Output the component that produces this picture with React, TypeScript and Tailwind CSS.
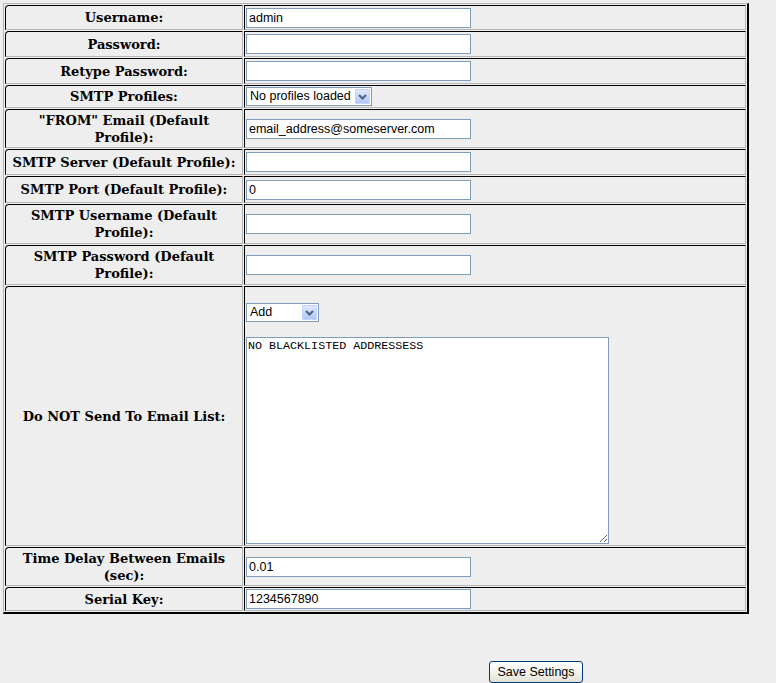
import React from 'react';

type Row = {
  label: string[];
  h: string;
  kind: 'text' | 'profiles' | 'blacklist';
  value?: string;
};

const rows: Row[] = [
  { label: ['Username:'], h: 'h-[25px]', kind: 'text', value: 'admin' },
  { label: ['Password:'], h: 'h-[26px]', kind: 'text', value: '' },
  { label: ['Retype Password:'], h: 'h-[26px]', kind: 'text', value: '' },
  { label: ['SMTP Profiles:'], h: 'h-[23px]', kind: 'profiles' },
  { label: ['"FROM" Email (Default', 'Profile):'], h: 'h-[39px]', kind: 'text', value: 'email_address@someserver.com' },
  { label: ['SMTP Server (Default Profile):'], h: 'h-[26px]', kind: 'text', value: '' },
  { label: ['SMTP Port (Default Profile):'], h: 'h-[27px]', kind: 'text', value: '0' },
  { label: ['SMTP Username (Default', 'Profile):'], h: 'h-[40px]', kind: 'text', value: '' },
  { label: ['SMTP Password (Default', 'Profile):'], h: 'h-[40px]', kind: 'text', value: '' },
  { label: ['Do NOT Send To Email List:'], h: 'h-[260px]', kind: 'blacklist' },
  { label: ['Time Delay Between Emails', '(sec):'], h: 'h-[39px]', kind: 'text', value: '0.01' },
  { label: ['Serial Key:'], h: 'h-[24px]', kind: 'text', value: '1234567890' },
];

const sans = { fontFamily: '"Liberation Sans", Arial, sans-serif' };

// XP style drop-down arrow box
const Arrow = () => (
  <span className="pointer-events-none absolute right-[2px] top-[2px] bottom-[2px] w-[15px] rounded-[1px] border border-[#c3d3fd] bg-gradient-to-b from-[#dfe8fd] to-[#b2c6f6] flex items-center justify-center">
    <svg width="9" height="6" viewBox="0 0 9 6">
      <path d="M1 1 L4.5 4.5 L8 1" fill="none" stroke="#4d6185" strokeWidth="2" />
    </svg>
  </span>
);

const XpSelect = ({ w, text }: { w: string; text: string }) => (
  <span className={`relative block ${w} h-[19px]`}>
    <select
      defaultValue={text}
      className="block appearance-none w-full h-full border border-[#7f9db9] bg-white pl-[3px] text-[12.5px] leading-[17px] text-black outline-none"
      style={sans}
    >
      <option>{text}</option>
    </select>
    <Arrow />
  </span>
);

function Field({ row }: { row: Row }) {
  if (row.kind === 'profiles') {
    return <XpSelect w="w-[126px]" text="No profiles loaded" />;
  }
  if (row.kind === 'blacklist') {
    return (
      <div className="flex flex-col pt-[15px]">
        <XpSelect w="w-[73px]" text="Add" />
        <textarea
          defaultValue="NO BLACKLISTED ADDRESSESS"
          className="block mt-[15px] w-[363px] h-[207px] border border-[#7f9db9] bg-white px-[1px] py-[1px] text-[11.7px] leading-[14px] text-black outline-none resize"
          style={{ fontFamily: '"Liberation Mono", "Courier New", monospace' }}
        />
      </div>
    );
  }
  return (
    <input
      type="text"
      defaultValue={row.value}
      className="block w-[225px] h-[20px] border border-[#7f9db9] bg-white px-[2px] text-[12.5px] text-black outline-none"
      style={sans}
    />
  );
}

export default function App() {
  return (
    <div className="min-h-[683px] w-full bg-[#eeeeee] pt-[3px] pl-[3px]">
      <table className="w-[746px] table-fixed border-separate border-spacing-[1px] border-t border-l border-[#b5b5b5] border-r-2 border-b-2 border-r-black border-b-black">
        <colgroup>
          <col className="w-[238px]" />
          <col className="w-[502px]" />
        </colgroup>
        <tbody>
          {rows.map((row, i) => (
            <tr key={i}>
              <td
                className={`${row.h} p-0 align-middle text-center border border-t-black border-l-black border-r-[#b5b5b5] border-b-[#b5b5b5] rounded-tl-[4px] bg-[#eeeeee] text-[13px] leading-[17px] font-bold text-black`}
                style={{ fontFamily: '"DejaVu Serif", "Liberation Serif", serif' }}
              >
                {row.label.map((l, j) => (
                  <div key={j}>{l}</div>
                ))}
              </td>
              <td className={`${row.h} p-[1px] align-middle leading-none border border-t-black border-l-black border-r-[#b5b5b5] border-b-[#b5b5b5] bg-[#eeeeee]`}>
                <Field row={row} />
              </td>
            </tr>
          ))}
        </tbody>
      </table>
      <div className="pt-[47px] pl-[486px]">
        <button
          type="button"
          className="block w-[94px] h-[22px] rounded-[3px] border border-[#003c74] bg-gradient-to-b from-white via-[#f4f3ee] to-[#e3e1d6] text-[12.5px] leading-[20px] text-black"
          style={sans}
        >
          Save Settings
        </button>
      </div>
    </div>
  );
}
